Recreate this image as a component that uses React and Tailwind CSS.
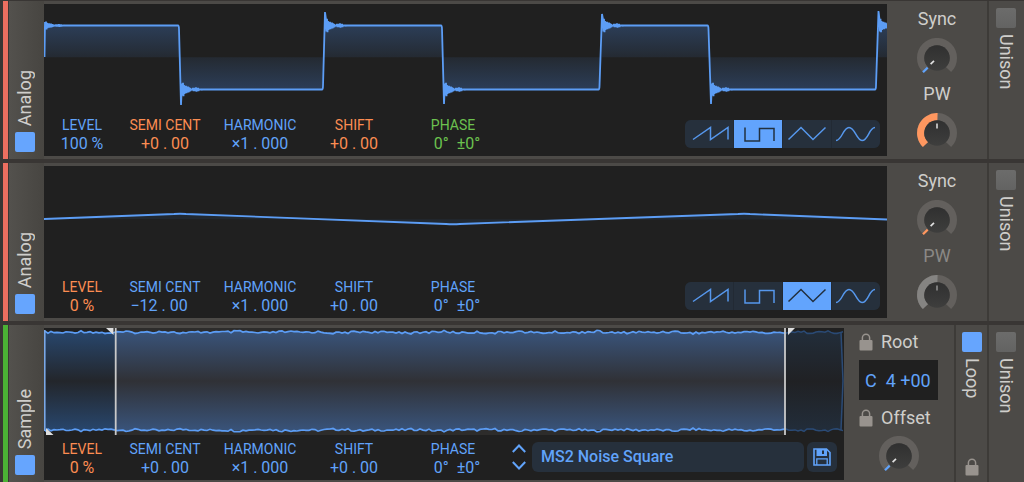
import { useState } from "react";
import clsx from "clsx";

const SHAPES = [
  { id: "saw", label: "Saw", path: "M8 19.5 L25.5 7.5 V19.5 L43 7.5 V19.5" },
  { id: "square", label: "Square", path: "M11 7.5 V21 H25.5 V8.5 H40 V21" },
  { id: "triangle", label: "Triangle", path: "M5.5 19.5 L18 7.5 L30 19.5 L42.5 7.5" },
  { id: "sine", label: "Sine", path: "M4 20.5 C10 20.5 11 7.5 17 7.5 C23 7.5 24.5 20.5 30 20.5 C36.5 20.5 37 7.5 43 7.5" },
];

const TONES = {
  blue: "text-[#61a3fa]",
  orange: "text-[#fc8d52]",
  green: "text-[#6cc24f]",
};

// Edges of the pulse wave, one entry for each jump: ramp start, ramp end, overshoot.
const EDGES = [
  { from: 135, to: 137, peak: 101, high: false },
  { from: 279, to: 281, peak: 8, high: true },
  { from: 398, to: 400, peak: 100, high: false },
  { from: 555.5, to: 558, peak: 10, high: true },
  { from: 664.5, to: 667, peak: 100, high: false },
  { from: 832, to: 834.5, peak: 7, high: true },
];
const HIGH = 21.5;
const LOW = 85.5;
const RING = [8, 9, 6, 5, 5, 4, 4, 3, 2, 1, 1, 2, 2, 2, 3, 2, 2, 1, 1, 1, 0];

function ringing(x, y, scale = 1) {
  return RING.map((amp, i) => `L${x + i} ${y - amp * scale * 0.75} L${x + i + 0.5} ${y + amp * scale * 0.75}`).join(" ");
}

function pulsePath() {
  let d = `M0.5 53 L1 18 ${ringing(1, HIGH, 0.6)}`;
  let level = HIGH;
  EDGES.forEach((edge) => {
    const next = edge.high ? HIGH : LOW;
    d += ` L${edge.from - 1} ${level} Q${edge.from} ${level} ${edge.from} ${level + (next - level) * 0.06}`;
    d += ` L${edge.to} ${edge.peak} ${ringing(edge.to + 1, next)}`;
    level = next;
  });
  return d;
}

const TRIANGLE_PATH = "M0 53 L130 48 Q136 47.5 142 48 L402 58 Q409 58.5 416 58 L694 48 Q700 47.5 706 48 L843 53.5";

// Small deterministic wobble for the outline of the noise sample.
const WOBBLE = Array.from({ length: 267 }, (_, i) => {
  const v = Math.sin(i * 12.9898) * 43758.5453;
  const slow = Math.sin(i * 0.37) * Math.sin(i * 0.11);
  return (v - Math.floor(v) - 0.5) * 2.4 + slow * 0.8;
});

function noisePath(y, dir) {
  return WOBBLE.map((w, i) => `${i ? "L" : "M"}${1 + i * 3} ${(y + dir * w).toFixed(1)}`).join(" ");
}

function Toggle({ label, on = false }) {
  const [checked, setChecked] = useState(on);
  return (
    <input
      type="checkbox"
      aria-label={label}
      checked={checked}
      onChange={(e) => setChecked(e.target.checked)}
      className="block size-5 shrink-0 appearance-none rounded-xs bg-linear-to-b from-[#6c6c6b] to-[#636362] checked:from-[#66a5fe] checked:to-[#66a5fe]"
    />
  );
}

function Knob({ label, mode = "zero", tone = "#61a3fa" }) {
  return (
    <button type="button" aria-label={label} className="size-10 shrink-0">
      <svg viewBox="-20 -20 40 40" className="size-10" fill="none">
        <defs>
          <linearGradient id="cap" x1="0" y1="0" x2="0" y2="1">
            <stop offset="0" stopColor="#303030" />
            <stop offset="1" stopColor="#3e3e3d" />
          </linearGradient>
        </defs>
        <path d="M-11.5 11.5 A16.3 16.3 0 1 1 11.5 11.5" stroke="#63605d" strokeWidth="7.4" />
        {mode === "half" && <path d="M-11.5 11.5 A16.3 16.3 0 0 1 0.5 -16.3" stroke={tone} strokeWidth="7.4" />}
        <circle r="12.8" fill="url(#cap)" />
        {mode === "half" ? (
          <path d="M0 -9.5 V-4.5" stroke={tone === "#858482" ? "#8f8f8f" : "#d8d8d8"} strokeWidth="1.6" />
        ) : (
          <>
            <path d="M-14 14.3 L-9.3 9.6" stroke={tone} strokeWidth="2.2" />
            <path d="M-6.4 6.2 L-3 2.8" stroke="#e0e0e0" strokeWidth="1.7" />
          </>
        )}
      </svg>
    </button>
  );
}

function Lock({ label, className }) {
  return (
    <button type="button" aria-label={label} className={clsx("shrink-0", className)}>
      <svg viewBox="0 0 14 18" className="h-[18px] w-3.5" fill="none">
        <path d="M3.4 8.5 V4.8 A3.6 3.6 0 0 1 10.6 4.8 V8.5" stroke="#98938e" strokeWidth="1.5" />
        <rect x="0.5" y="7" width="13" height="10.5" rx="1" fill="#98938e" />
      </svg>
    </button>
  );
}

function Param({ name, value, tone = "blue", className }) {
  return (
    <div className={clsx("shrink-0 text-center whitespace-pre", TONES[tone], className)}>
      <div className="text-sm leading-[18px]">{name}</div>
      <div className="text-base leading-5">{value}</div>
    </div>
  );
}

function Params({ level, semi, harmonic, shift, phase }) {
  return (
    <div className="flex pb-0.5">
      <Param name="LEVEL" className="w-19" {...level} />
      <Param name="SEMI CENT" className="w-[90px]" {...semi} />
      <Param name="HARMONIC" className="w-[100px]" {...harmonic} />
      <Param name="SHIFT" className="w-[88px]" {...shift} />
      <Param name="PHASE" className="w-[110px]" {...phase} />
    </div>
  );
}

function ShapePicker({ initial }) {
  const [shape, setShape] = useState(initial);
  return (
    <div role="group" aria-label="Waveform" className="mr-[7px] mb-2 flex gap-px overflow-hidden rounded-md bg-[#222a34]">
      {SHAPES.map((s) => (
        <button
          key={s.id}
          type="button"
          aria-label={s.label}
          aria-pressed={shape === s.id}
          onClick={() => setShape(s.id)}
          className={clsx("h-7 w-12", shape === s.id ? "bg-[#62a4fd] text-[#22303f]" : "bg-[#26303c] text-[#5697ec]")}
        >
          <svg viewBox="0 0 48 28" className="h-7 w-12" fill="none" stroke="currentColor" strokeWidth="1.5">
            <path d={s.path} />
          </svg>
        </button>
      ))}
    </div>
  );
}

function Display({ graph, params, className = "my-[3px]", children }) {
  return (
    <div className={clsx("flex min-h-38 min-w-0 flex-1 flex-col justify-between bg-[#202020]", className)}>
      {graph}
      <div className="flex items-end justify-between">
        <Params {...params} />
        {children}
      </div>
    </div>
  );
}

function PulseGraph() {
  return (
    <svg viewBox="0 0 843 110" preserveAspectRatio="none" className="h-[110px] w-full" fill="none">
      <defs>
        <linearGradient id="pulse-fill" gradientUnits="userSpaceOnUse" x1="0" y1="21" x2="0" y2="86">
          <stop offset="0" stopColor="#2c3e58" />
          <stop offset="0.5" stopColor="#242a32" />
          <stop offset="1" stopColor="#2c3e58" />
        </linearGradient>
      </defs>
      <path
        fill="url(#pulse-fill)"
        d="M0 21.5 H134.5 L135.5 53.3 H0 Z M136 53.3 H279.5 L278.5 85.5 H136.5 Z M280 21.5 H397.5 L398.5 53.3 H280 Z M399 53.3 H557 L556 85.5 H399.5 Z M558 21.5 H664.5 L665.5 53.3 H558 Z M666 53.3 H833 L832 85.5 H667 Z M834 21.5 H843 V53.3 H834 Z"
      />
      <path d={pulsePath()} stroke="#5c9df5" strokeWidth="1.8" strokeLinejoin="bevel" />
    </svg>
  );
}

function TriangleGraph() {
  return (
    <svg viewBox="0 0 843 110" preserveAspectRatio="none" className="h-[110px] w-full" fill="none">
      <path d={`${TRIANGLE_PATH} Z`} fill="#222931" />
      <path d={TRIANGLE_PATH} stroke="#5c9df5" strokeWidth="1.8" />
    </svg>
  );
}

function SampleGraph() {
  return (
    <svg viewBox="0 0 800 110" preserveAspectRatio="none" className="h-[110px] w-full" fill="none">
      <defs>
        <linearGradient id="outer-fill" x1="0" y1="0" x2="0" y2="1">
          <stop offset="0" stopColor="#28466c" />
          <stop offset="0.5" stopColor="#23262b" />
          <stop offset="1" stopColor="#28466c" />
        </linearGradient>
        <linearGradient id="loop-fill" x1="0" y1="0" x2="0" y2="1">
          <stop offset="0" stopColor="#395379" />
          <stop offset="0.5" stopColor="#303136" />
          <stop offset="1" stopColor="#395379" />
        </linearGradient>
        <linearGradient id="tail-fill" x1="0" y1="0" x2="0" y2="1">
          <stop offset="0" stopColor="#222d3a" />
          <stop offset="0.5" stopColor="#202124" />
          <stop offset="1" stopColor="#222d3a" />
        </linearGradient>
        <clipPath id="played">
          <rect width="741" height="110" />
        </clipPath>
        <clipPath id="tail">
          <rect x="741" width="59" height="110" />
        </clipPath>
      </defs>
      <rect x="72" width="669" height="107" fill="#2d2c2b" />
      <rect x="1" y="4" width="71" height="98" fill="url(#outer-fill)" />
      <rect x="72" y="4" width="669" height="98" fill="url(#loop-fill)" />
      <path d="M741 4 H797 L799.5 53 L797 102 H741 Z" fill="url(#tail-fill)" />
      <g stroke="#5c9df5" strokeWidth="1.7" clipPath="url(#played)">
        <path d={noisePath(4.3, 1)} />
        <path d={noisePath(102, -1)} />
      </g>
      <g stroke="#2a4a75" strokeWidth="1.5" clipPath="url(#tail)">
        <path d={noisePath(4.3, 1)} />
        <path d={noisePath(102, -1)} />
        <path d="M797 4 L799 53 L797 102" />
      </g>
      <path d="M0.8 2 V103" stroke="#7fb0f2" strokeWidth="1.5" />
      <path d="M71.7 0 V107 M741 0 V107" stroke="#c9c9c9" strokeWidth="1.8" />
      <path d="M62 0 H69.5 V7 Z M744 0 H751 L744 7 Z M2 100 L9.5 107 H2 Z" fill="#dedede" />
    </svg>
  );
}

function NameTab({ name }) {
  return (
    <div className="flex w-[35px] shrink-0 flex-col items-center justify-end gap-1.5 bg-linear-to-r from-[#53514d] to-[#474541] pr-[3px] pb-[7px]">
      <span className="rotate-180 text-lg leading-5 [writing-mode:vertical-rl]">{name}</span>
      <Toggle label={name} on />
    </div>
  );
}

function SideTab({ name, on = false, className, children }) {
  return (
    <div className={clsx("flex shrink-0 flex-col items-center gap-1.5 border-l-2 border-[#3d3b38] pt-[7px]", className)}>
      <Toggle label={name} on={on} />
      <span className="text-lg leading-5 [writing-mode:vertical-rl]">{name}</span>
      {children}
    </div>
  );
}

function Row({ name, strip, children }) {
  return (
    <section aria-label={name} className="flex bg-[#4c4a47] pr-0.5">
      <div className={clsx("w-1.5 shrink-0 border-r border-[#3a3735]", strip)} />
      <NameTab name={name} />
      {children}
    </section>
  );
}

function AnalogRow({ shape, graph, params, syncTone, pwTone, pwOff }) {
  return (
    <Row name="Analog" strip="bg-[#ec6f60]">
      <Display graph={graph} params={params}>
        <ShapePicker initial={shape} />
      </Display>
      <div className="flex w-[100px] shrink-0 flex-col items-center pt-2 text-lg leading-5">
        <span>Sync</span>
        <div className="mt-[9px] h-10">
          <Knob label="Sync" tone={syncTone} />
        </div>
        <span className={clsx("mt-1.5", pwOff && "text-[#8a8885]")}>PW</span>
        <div className="mt-[9px] h-10">
          <Knob label="PW" mode="half" tone={pwTone} />
        </div>
      </div>
      <SideTab name="Unison" className="w-[35px]" />
    </Row>
  );
}

function PresetPicker() {
  return (
    <div className="flex shrink-0 items-center pr-[7px] pb-2">
      <div className="mr-1.5 flex flex-col gap-1 text-[#61a3fa]">
        <button type="button" aria-label="Previous sample">
          <svg viewBox="0 0 14 12" className="h-3 w-3.5" fill="none" stroke="currentColor" strokeWidth="2">
            <path d="M0.8 9 L7 2.5 L13.2 9" />
          </svg>
        </button>
        <button type="button" aria-label="Next sample">
          <svg viewBox="0 0 14 12" className="h-3 w-3.5" fill="none" stroke="currentColor" strokeWidth="2">
            <path d="M0.8 3 L7 9.5 L13.2 3" />
          </svg>
        </button>
      </div>
      <button
        type="button"
        className="h-[30px] w-[272px] rounded-md bg-[#26303c] px-[9px] text-left text-base leading-5 font-medium whitespace-nowrap text-[#61a3fa]"
      >
        MS2 Noise Square
      </button>
      <button
        type="button"
        aria-label="Save sample"
        className="ml-[3px] flex size-[30px] items-center justify-center rounded-md bg-[#26303c] text-[#61a3fa]"
      >
        <svg viewBox="0 0 18 18" className="size-[18px]" fill="none">
          <path d="M1 1 H13.5 L17 4.5 V17 H1 Z" stroke="currentColor" strokeWidth="1.6" />
          <path d="M3.5 1 H14 V8 H3.5 Z" fill="currentColor" />
          <path d="M9 2.5 H11 V6 H9 Z" fill="#26303c" />
          <path d="M3.8 17 V10.8 H14.2 V17" stroke="currentColor" strokeWidth="1.3" />
        </svg>
      </button>
    </div>
  );
}

function SampleRow({ params }) {
  return (
    <Row name="Sample" strip="bg-[#4bb135]">
      <Display graph={<SampleGraph />} params={params} className="mt-[3px] mb-0.5">
        <PresetPicker />
      </Display>
      <div className="flex w-[110px] shrink-0 flex-col pt-[7px] pl-[15px] text-lg leading-5">
        <div className="flex items-center gap-2">
          <Lock label="Lock root" />
          <label htmlFor="root-note">Root</label>
        </div>
        <input
          id="root-note"
          defaultValue="C  4 +00"
          className="mt-2 h-10 w-[79px] bg-[#202020] pl-1.5 whitespace-pre text-[#61a3fa]"
        />
        <div className="mt-2 flex items-center gap-2">
          <Lock label="Lock offset" />
          <span>Offset</span>
        </div>
        <div className="mt-2 flex h-10 w-20 justify-center">
          <Knob label="Offset" />
        </div>
      </div>
      <SideTab name="Loop" on className="w-[33px]">
        <Lock label="Lock loop" className="mt-auto mb-1.5" />
      </SideTab>
      <SideTab name="Unison" className="w-[35px]" />
    </Row>
  );
}

const osc1 = {
  level: { value: "100 %" },
  semi: { value: "+0 . 00", tone: "orange" },
  harmonic: { value: "×1 . 000" },
  shift: { value: "+0 . 00", tone: "orange" },
  phase: { value: "  0°  ±0°", tone: "green" },
};

const osc2 = {
  level: { value: "0 %", tone: "orange" },
  semi: { value: "−12 . 00   " },
  harmonic: { value: "×1 . 000" },
  shift: { value: "+0 . 00" },
  phase: { value: "  0°  ±0°" },
};

const sampler = { ...osc2, semi: { value: "+0 . 00" } };

export default function App() {
  return (
    <main className="flex min-h-screen flex-col gap-1 bg-[#393634] pt-px pl-[3px] font-[Roboto,sans-serif] text-[#cfcecb]">
      <AnalogRow shape="square" graph={<PulseGraph />} params={osc1} syncTone="#61a3fa" pwTone="#ff975f" />
      <AnalogRow shape="triangle" graph={<TriangleGraph />} params={osc2} syncTone="#ff975f" pwTone="#858482" pwOff />
      <SampleRow params={sampler} />
    </main>
  );
}
